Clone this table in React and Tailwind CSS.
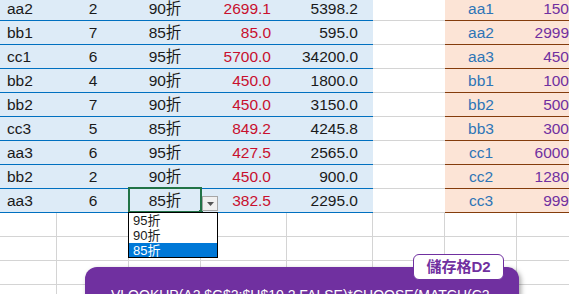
const rows = [
  ['aa2', 2, '90折', '2699.1', '5398.2', 'aa1', 150],
  ['bb1', 7, '85折', '85.0', '595.0', 'aa2', 2999],
  ['cc1', 6, '95折', '5700.0', '34200.0', 'aa3', 450],
  ['bb2', 4, '90折', '450.0', '1800.0', 'bb1', 100],
  ['bb2', 7, '90折', '450.0', '3150.0', 'bb2', 500],
  ['cc3', 5, '85折', '849.2', '4245.8', 'bb3', 300],
  ['aa3', 6, '95折', '427.5', '2565.0', 'cc1', 6000],
  ['bb2', 2, '90折', '450.0', '900.0', 'cc2', 1280],
  ['aa3', 6, '85折', '382.5', '2295.0', 'cc3', 999],
];

function Dropdown() {
  return (
    <>
      <div className="absolute left-[-1px] top-[-2px] w-[74px] h-[26px] border-2 border-[#217346] z-10">
        <div className="absolute right-[-3px] bottom-[-3px] w-[4px] h-[4px] bg-[#217346]" />
      </div>
      <div className="absolute left-[73px] top-[7px] w-[16px] h-[15px] bg-[#f0f0f0] border border-[#a6a6a6] flex items-center justify-center z-10">
        <svg width="7" height="4" viewBox="0 0 7 4">
          <path d="M0 0 L7 0 L3.5 4 Z" fill="#555" />
        </svg>
      </div>
      <div className="absolute left-[-1px] top-[23px] w-[90px] h-[46px] bg-white border border-black z-20 text-[13px] leading-[15px] text-left">
        <div className="pl-[4px] h-[15px]">95折</div>
        <div className="pl-[4px] h-[15px]">90折</div>
        <div className="pl-[4px] h-[14px] bg-[#0078d7] text-white">85折</div>
      </div>
    </>
  );
}

export default function App() {
  return (
    <div className="relative w-[569px] h-[294px] overflow-hidden bg-white text-[15.5px] text-[#1a1a1a] font-['Liberation_Sans','Noto_Sans_CJK_TC',sans-serif]">
      <div className="-mt-[3px] w-[600px]">
        {rows.map((r, i) => (
          <div key={i} className="flex h-[24px]">
            <div className="flex w-[373px] bg-[#ddebf7] border-b border-[#0070c0]">
              <div className="w-[57px] pl-[7px] flex items-center">{r[0]}</div>
              <div className="w-[72px] flex items-center justify-center">{r[1]}</div>
              <div className="relative w-[72px] flex items-center justify-center">
                {r[2]}
                {i === rows.length - 1 && <Dropdown />}
              </div>
              <div className="w-[86px] pr-[16px] flex items-center justify-end text-[#c8102e]">{r[3]}</div>
              <div className="w-[86px] pr-[15px] flex items-center justify-end">{r[4]}</div>
            </div>
            <div className="w-[72px] border-b border-[#d4d4d4]" />
            <div className="flex w-[155px] bg-[#fce4d6] border-b border-[#843c0c]">
              <div className="w-[72px] flex items-center justify-center text-[#2e75b6]">{r[5]}</div>
              <div className="w-[52px] flex items-center justify-end text-[#7030a0]">{r[6]}</div>
            </div>
          </div>
        ))}
        {[0, 1, 2, 3].map((k) => (
          <div key={k} className="flex h-[24px] border-b border-[#d4d4d4]">
            {[57, 72, 72, 86, 86, 72, 72, 72].map((w, j) => (
              <div key={j} style={{ width: w }} className="border-r border-[#d4d4d4]" />
            ))}
          </div>
        ))}
      </div>

      <div className="absolute left-[85px] top-[267px] w-[434px] h-[60px] rounded-[12px] bg-[#7030a0] shadow-[2px_2px_5px_rgba(0,0,0,0.35)] px-[26px] pt-[18px] text-white text-[14px] whitespace-nowrap">
        <div className="overflow-hidden">VLOOKUP(A2,$G$2:$H$10,2,FALSE)*CHOOSE(MATCH(C2,</div>
        <div className="absolute left-[328px] top-[-13px] w-[91px] h-[26px] bg-white border border-[#7030a0] rounded-[6px] flex items-center justify-center text-[#7030a0] font-bold text-[15px]">
          儲存格D2
        </div>
      </div>
    </div>
  );
}
